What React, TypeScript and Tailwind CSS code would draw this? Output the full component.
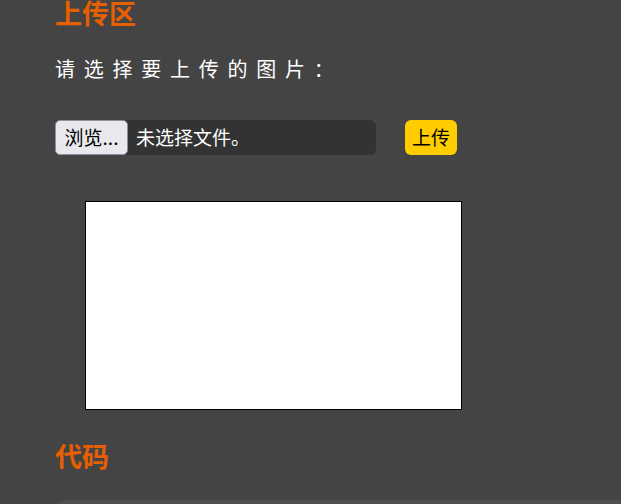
import React from "react";

export default function App() {
  return (
    <div
      className="h-[504px] w-full overflow-hidden bg-[#444444] pl-[55px]"
      style={{ fontFamily: '"Noto Sans CJK SC", "Noto Sans", sans-serif' }}
    >
      <h2 className="mt-[-2px] text-[27px] font-bold leading-[30px] text-[#e65f00]">上传区</h2>
      <p className="mt-[28px] text-[20px] leading-[26px] tracking-[8.75px] text-white">请选择要上传的图片：</p>
      <div className="mt-[38px] flex items-center">
        <div className="flex h-[35px] w-[321px] items-center rounded-[6px] bg-[#333333]">
          <div className="flex h-[35px] w-[73px] items-center justify-center rounded-[5px] border border-[#8f8f9d] bg-[#e9e9ed] text-[19px] text-black">
            浏览...
          </div>
          <span className="ml-[8px] text-[19px] text-white">未选择文件。</span>
        </div>
        <button className="ml-[29px] flex h-[35px] w-[52px] items-center justify-center rounded-[6px] bg-[#ffcc00] text-[19px] text-black">
          上传
        </button>
      </div>
      <div className="ml-[30px] mt-[46px] h-[209px] w-[377px] border border-black bg-white" />
      <h2 className="mt-[31px] text-[27px] font-bold leading-[30px] text-[#e65f00]">代码</h2>
      <div className="mt-[29px] h-[40px] w-[600px] rounded-[10px] bg-[#4f4f4f]" />
    </div>
  );
}
